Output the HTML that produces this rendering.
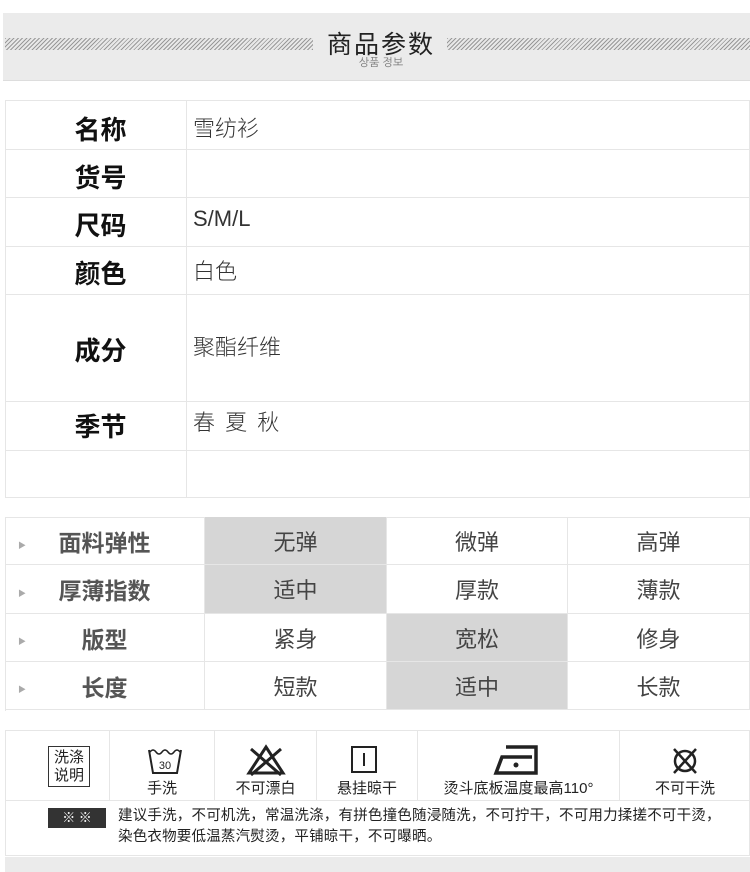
<!DOCTYPE html>
<html><head><meta charset="utf-8"><style>
*{margin:0;padding:0;box-sizing:border-box}
body{width:750px;height:872px;background:#fff;position:relative;overflow:hidden;font-family:"Liberation Sans","Noto Sans CJK SC",sans-serif;color:#333}
.a{position:absolute}
.hdr{left:3px;top:13px;width:747px;height:68px;background:#ebebeb;border-bottom:1px solid #ddd}
.stripe{top:38px;height:12px;background:repeating-linear-gradient(135deg,#999 0 1px,#e8e8e8 1px 3px)}
.t1{left:5px;top:100px;width:745px;height:398px;border:1px solid #e6e6e6}
.hl{position:absolute;left:5px;width:745px;height:1px;background:#e6e6e6}
.lab{position:absolute;left:10px;width:181px;text-align:center;font-weight:bold;font-size:26px;color:#111}
.val{position:absolute;left:193px;font-size:22px;color:#333;font-weight:300}
.c{position:absolute;display:flex;align-items:center;justify-content:center;font-size:22px;color:#444;border-right:1px solid #e6e6e6;border-bottom:1px solid #e6e6e6}
.g{background:#d6d6d6}
.l2{font-weight:bold;color:#555;font-size:23px}
.tri{position:absolute;left:18px;font-size:8px;color:#aaa}
.ic{position:absolute;top:731px;height:69px;border-right:1px solid #e6e6e6;text-align:center;font-size:15px;color:#222}
.ic span{position:absolute;left:0;right:0;top:46px}
</style></head><body>
<div class="a hdr"></div>
<div class="a stripe" style="left:5px;width:308px"></div>
<div class="a stripe" style="left:447px;width:303px"></div>
<div class="a" style="left:320px;top:25px;width:122px;text-align:center;font-size:25px;color:#222;letter-spacing:2px">商品参数</div>
<div class="a" style="left:320px;top:56px;width:122px;text-align:center;font-size:11px;color:#777;font-family:'NanumGothic','Noto Sans CJK KR',sans-serif">상품 정보</div>

<div class="a t1"></div>
<div class="a" style="left:186px;top:100px;width:1px;height:398px;background:#e6e6e6"></div>
<div class="hl" style="top:149px"></div><div class="hl" style="top:197px"></div><div class="hl" style="top:246px"></div><div class="hl" style="top:294px"></div><div class="hl" style="top:401px"></div><div class="hl" style="top:450px"></div>
<div class="lab" style="top:110px">名称</div><div class="val" style="top:111px">雪纺衫</div>
<div class="lab" style="top:158px">货号</div>
<div class="lab" style="top:206px">尺码</div><div class="val" style="top:206px">S/M/L</div>
<div class="lab" style="top:254px">颜色</div><div class="val" style="top:254px">白色</div>
<div class="lab" style="top:331px">成分</div><div class="val" style="top:330px">聚酯纤维</div>
<div class="lab" style="top:407px">季节</div><div class="val" style="top:405px;letter-spacing:2px">春 夏 秋</div>

<div class="a" style="left:5px;top:517px;width:745px;height:194px;border-left:1px solid #e6e6e6;border-top:1px solid #e6e6e6"></div>
<div class="c l2" style="left:5px;top:517px;width:200px;height:48px">面料弹性</div>
<div class="c g" style="left:205px;top:517px;width:182px;height:48px">无弹</div>
<div class="c" style="left:387px;top:517px;width:181px;height:48px">微弹</div>
<div class="c" style="left:568px;top:517px;width:182px;height:48px">高弹</div>
<div class="c l2" style="left:5px;top:565px;width:200px;height:49px">厚薄指数</div>
<div class="c g" style="left:205px;top:565px;width:182px;height:49px">适中</div>
<div class="c" style="left:387px;top:565px;width:181px;height:49px">厚款</div>
<div class="c" style="left:568px;top:565px;width:182px;height:49px">薄款</div>
<div class="c l2" style="left:5px;top:614px;width:200px;height:48px">版型</div>
<div class="c" style="left:205px;top:614px;width:182px;height:48px">紧身</div>
<div class="c g" style="left:387px;top:614px;width:181px;height:48px">宽松</div>
<div class="c" style="left:568px;top:614px;width:182px;height:48px">修身</div>
<div class="c l2" style="left:5px;top:662px;width:200px;height:48px">长度</div>
<div class="c" style="left:205px;top:662px;width:182px;height:48px">短款</div>
<div class="c g" style="left:387px;top:662px;width:181px;height:48px">适中</div>
<div class="c" style="left:568px;top:662px;width:182px;height:48px">长款</div>
<div class="tri" style="top:540px">▶</div><div class="tri" style="top:588px">▶</div><div class="tri" style="top:636px">▶</div><div class="tri" style="top:684px">▶</div>

<div class="a" style="left:5px;top:730px;width:745px;height:126px;border:1px solid #e6e6e6"></div>
<div class="ic" style="left:5px;width:105px"><div style="position:absolute;left:43px;top:15px;width:42px;height:41px;border:1px solid #333;font-size:15px;line-height:18px;padding-top:2px">洗涤<br>说明</div></div>
<div class="ic" style="left:110px;width:105px"><svg style="position:absolute;left:37px;top:16px" width="36" height="28"><path d="M2 3 L6 26 H30 L34 3" fill="none" stroke="#222" stroke-width="2"/><path d="M3 5 q3 -4 6 0 q3 4 6 0 q3 -4 6 0 q3 4 6 0 q3 -4 6 0" fill="none" stroke="#222" stroke-width="1.5"/><text x="18" y="22" font-size="11" text-anchor="middle" fill="#222">30</text></svg><span>手洗</span></div>
<div class="ic" style="left:215px;width:102px"><svg style="position:absolute;left:30px;top:12px" width="42" height="34"><path d="M21 4 L38 30 H4 Z" fill="none" stroke="#222" stroke-width="3"/><path d="M6 6 L36 32 M36 6 L6 32" stroke="#222" stroke-width="3"/></svg><span>不可漂白</span></div>
<div class="ic" style="left:317px;width:101px"><svg style="position:absolute;left:33px;top:14px" width="30" height="28"><rect x="2" y="2" width="24" height="25" fill="none" stroke="#222" stroke-width="2"/><path d="M14 8 V21" stroke="#222" stroke-width="2"/></svg><span>悬挂晾干</span></div>
<div class="ic" style="left:418px;width:202px"><svg style="position:absolute;left:74px;top:12px" width="50" height="32"><path d="M14 4 H44 V30 H4 L10 14 H40" fill="none" stroke="#222" stroke-width="3.5"/><circle cx="24" cy="22" r="2.5" fill="#222"/></svg><span>烫斗底板温度最高110°</span></div>
<div class="ic" style="left:620px;width:130px;border-right:none"><svg style="position:absolute;left:49px;top:15px" width="32" height="30"><circle cx="16" cy="15" r="10" fill="none" stroke="#222" stroke-width="2.5"/><path d="M5 3 L27 27 M27 3 L5 27" stroke="#222" stroke-width="2.5"/></svg><span>不可干洗</span></div>
<div class="a" style="left:5px;top:800px;width:745px;height:1px;background:#e6e6e6"></div>
<div class="a" style="left:48px;top:808px;width:58px;height:20px;background:#333;color:#fff;font-size:13px;text-align:center;line-height:20px">※ ※</div>
<div class="a" style="left:118px;top:806px;width:630px;font-size:14.5px;line-height:21px;color:#222;letter-spacing:0.2px;white-space:nowrap">建议手洗，不可机洗，常温洗涤，有拼色撞色随浸随洗，不可拧干，不可用力揉搓不可干烫，<br>染色衣物要低温蒸汽熨烫，平铺晾干，不可曝晒。</div>
<div class="a" style="left:5px;top:857px;width:745px;height:15px;background:#ebebeb"></div>
</body></html>
